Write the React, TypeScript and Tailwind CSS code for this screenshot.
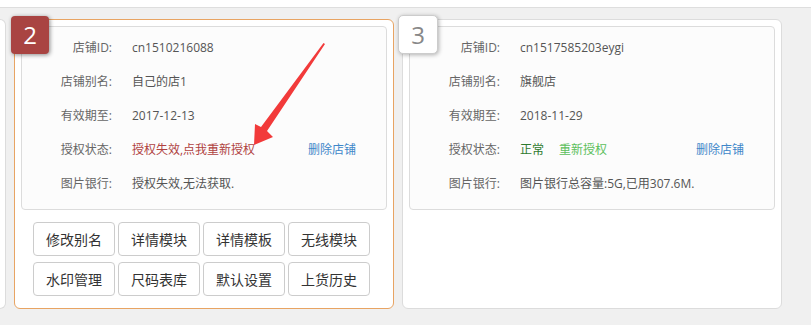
import React from 'react'

type Row = { label: string; value: React.ReactNode; extra?: React.ReactNode }

const buttons = ['修改别名', '详情模块', '详情模板', '无线模块', '水印管理', '尺码表库', '默认设置', '上货历史']

function InfoPanel({ rows }: { rows: Row[] }) {
  return (
    <div className="rounded-[4px] border border-[#dcdcdc] bg-[#fcfcfc] pt-[4px] pb-[8px]">
      {rows.map((r) => (
        <div key={r.label} className="flex h-[34px] items-center text-[12px]">
          <div className="w-[90px] shrink-0 text-right text-[#666]">{r.label}</div>
          <div className="ml-[20px] w-[176px] shrink-0 text-[#555]">{r.value}</div>
          {r.extra}
        </div>
      ))}
    </div>
  )
}

const del = <span className="text-[#3f87c9]">删除店铺</span>

export default function App() {
  const rows2: Row[] = [
    { label: '店铺ID:', value: 'cn1510216088' },
    { label: '店铺别名:', value: '自己的店1' },
    { label: '有效期至:', value: '2017-12-13' },
    { label: '授权状态:', value: <span className="text-[#b0423f]">授权失效,点我重新授权</span>, extra: del },
    { label: '图片银行:', value: '授权失效,无法获取.' },
  ]
  const rows3: Row[] = [
    { label: '店铺ID:', value: 'cn1517585203eygi' },
    { label: '店铺别名:', value: '旗舰店' },
    { label: '有效期至:', value: '2018-11-29' },
    {
      label: '授权状态:',
      value: (
        <span className="flex gap-[15px]">
          <span className="text-[#2e7a2e]">正常</span>
          <span className="text-[#5cbf5c]">重新授权</span>
        </span>
      ),
      extra: del,
    },
    { label: '图片银行:', value: '图片银行总容量:5G,已用307.6M.' },
  ]

  return (
    <div
      className="relative h-[325px] w-[811px] overflow-hidden bg-[#f0f0f0]"
      style={{ fontFamily: '"Open Sans", "Noto Sans CJK SC", sans-serif' }}
    >
      <div className="h-[8px] border-b border-[#dedede] bg-white" />

      <div className="mt-[11px] flex gap-[8px]">
        {/* previous card edge */}
        <div className="h-[290px] w-[6px] rounded-r-[6px] border-y border-r border-[#dcdcdc] bg-white" />

        {/* card 2 (selected) */}
        <div className="relative h-[290px] w-[380px] rounded-[6px] border border-[#e8a463] bg-white p-[6px]">
          <div className="absolute left-[-4px] top-[-4px] flex h-[38px] w-[38px] items-center justify-center rounded-[4px] bg-[#a94442] text-[24px] text-white shadow-[1px_1px_4px_rgba(0,0,0,0.45)]">
            2
          </div>
          <InfoPanel rows={rows2} />
          <div className="ml-[12px] mt-[12px] grid w-max grid-cols-4 gap-x-[3px] gap-y-[6px]">
            {buttons.map((b) => (
              <button
                key={b}
                className="flex h-[34px] w-[82px] items-center justify-center rounded-[4px] border border-[#ccc] bg-white text-[14px] text-[#333]"
              >
                {b}
              </button>
            ))}
          </div>
        </div>

        {/* card 3 */}
        <div className="relative h-[290px] w-[380px] rounded-[6px] border border-[#dcdcdc] bg-white p-[6px]">
          <div className="absolute left-[-5px] top-[-5px] flex h-[39px] w-[40px] items-center justify-center rounded-[5px] border border-[#ccc] bg-white text-[24px] text-[#888] shadow-[1px_1px_4px_rgba(0,0,0,0.3)]">
            3
          </div>
          <InfoPanel rows={rows3} />
        </div>
      </div>

      {/* annotation arrow */}
      <svg className="pointer-events-none absolute left-0 top-0" width="811" height="325">
        <polygon
          points="323.5,43 325,44 267,131 273,137 254,145 255,124 261,127"
          fill="#f23a3a"
        />
      </svg>
    </div>
  )
}
